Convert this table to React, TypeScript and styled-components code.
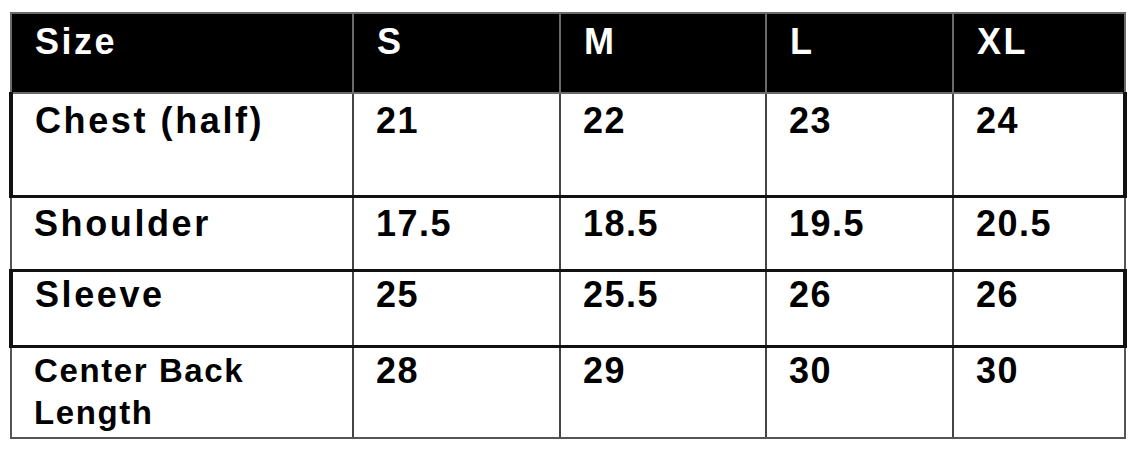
import React from "react";
import styled, { createGlobalStyle } from "styled-components";

const GlobalStyle = createGlobalStyle`
  html, body {
    margin: 0;
    padding: 0;
    background: #ffffff;
  }
  body {
    font-family: "Liberation Sans", Arial, sans-serif;
  }
`;

interface IRow {
  label: string[];
  values: string[];
  height: number;
  padTop: number;
  heavy: boolean;
  compact?: boolean;
}

const sizes = ["S", "M", "L", "XL"];

const rows: IRow[] = [
  { label: ["Chest (half)"], values: ["21", "22", "23", "24"], height: 103, padTop: 6, heavy: true },
  { label: ["Shoulder"], values: ["17.5", "18.5", "19.5", "20.5"], height: 74, padTop: 5, heavy: false },
  { label: ["Sleeve"], values: ["25", "25.5", "26", "26"], height: 76, padTop: 2, heavy: true },
  { label: ["Center Back", "Length"], values: ["28", "29", "30", "30"], height: 92, padTop: 2, heavy: false, compact: true }
];

const columnWidths = [342, 207, 206, 187, 172];

export default function App() {
  return (
    <>
      <GlobalStyle />
      <Page>
        <Table>
          <colgroup>
            {columnWidths.map((w, i) => (
              <col key={i} style={{ width: w }} />
            ))}
          </colgroup>
          <thead>
            <HeadRow>
              <HeadCell>Size</HeadCell>
              {sizes.map(s => (
                <HeadCell key={s}>{s}</HeadCell>
              ))}
            </HeadRow>
          </thead>
          <tbody>
            {rows.map((row, i) => (
              <BodyRow key={i} $height={row.height} $padTop={row.padTop} $heavy={row.heavy} $last={i === rows.length - 1}>
                <LabelCell $compact={!!row.compact}>
                  {row.label.map(line => (
                    <Line key={line}>{line}</Line>
                  ))}
                </LabelCell>
                {row.values.map((v, j) => (
                  <ValueCell key={j}>{v}</ValueCell>
                ))}
              </BodyRow>
            ))}
          </tbody>
        </Table>
      </Page>
    </>
  );
}

const Page = styled.div`
  padding: 12px 9px 16px 9px;
`;

const Table = styled.table`
  width: 1115px;
  table-layout: fixed;
  border-collapse: collapse;
  font-size: 36px;
  line-height: 42px;
  color: #000;
`;

const HeadRow = styled.tr`
  height: 80px;
  background: #000;
`;

const HeadCell = styled.th`
  padding: 7px 0 0 23px;
  vertical-align: top;
  text-align: left;
  color: #fff;
  font-weight: 700;
  letter-spacing: 2.5px;
  border: 2px solid #6a6a6a;
`;

const BodyRow = styled.tr<{ $height: number; $padTop: number; $heavy: boolean; $last: boolean }>`
  height: ${p => p.$height}px;

  td {
    padding-top: ${p => p.$padTop}px;
    border-bottom: ${p => (p.$last ? "2px solid #555" : "3px solid #111")};
  }

  td:first-child {
    border-left: ${p => (p.$heavy ? "4px solid #111" : "2px solid #555")};
  }

  td:last-child {
    border-right: ${p => (p.$heavy ? "4px solid #111" : "2px solid #555")};
  }
`;

const LabelCell = styled.td<{ $compact: boolean }>`
  padding-left: 22px;
  vertical-align: top;
  font-weight: 700;
  font-size: ${p => (p.$compact ? "33px" : "36px")};
  letter-spacing: ${p => (p.$compact ? "1.6px" : "2.6px")};
  border-left: 2px solid #444;
  border-right: 2px solid #444;
`;

const Line = styled.div`
  white-space: nowrap;
`;

const ValueCell = styled.td`
  padding-left: 22px;
  vertical-align: top;
  font-weight: 700;
  letter-spacing: 1.5px;
  border-left: 2px solid #444;
  border-right: 2px solid #444;
`;
